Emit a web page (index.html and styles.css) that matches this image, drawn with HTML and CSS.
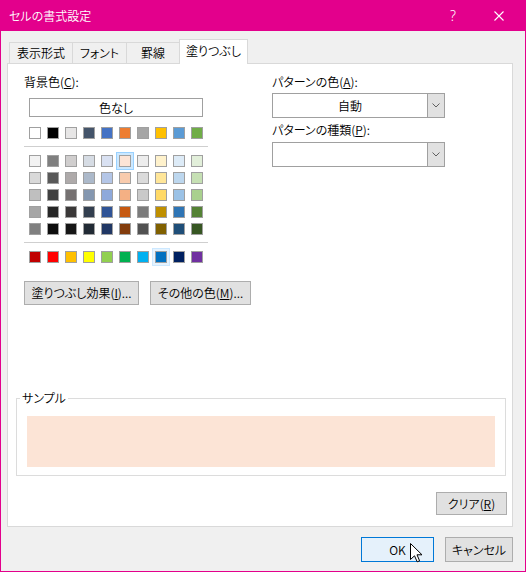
FILE: index.html
```html
<!DOCTYPE html>
<html lang="ja">
<head>
    <meta charset="UTF-8">
    <title>セルの書式設定</title>
    <link rel="stylesheet" href="styles.css">
</head>
<body>
    <div class="window">
        <div class="titlebar">
            <span class="title">セルの書式設定</span>
            <span class="caption-btn help">?</span>
            <span class="caption-btn close">
                <svg width="10" height="10" viewBox="0 0 10 10"><path d="M0.5 0.5 L9.5 9.5 M9.5 0.5 L0.5 9.5" stroke="#fff" stroke-width="1.1" fill="none"/></svg>
            </span>
        </div>

        <div class="tabs">
            <div class="tab tab-number">表示形式</div>
            <div class="tab tab-font">フォント</div>
            <div class="tab tab-border">罫線</div>
            <div class="tab tab-fill active">塗りつぶし</div>
        </div>

        <div class="panel">
            <div class="fill-top">
                <div class="bg-col">
                    <div class="field-label">背景色(<u>C</u>):</div>
                    <div class="none-btn">色なし</div>
                    <div class="swatches first" id="base-row"></div>
                    <div class="sep"></div>
                    <div class="theme" id="theme-grid"></div>
                    <div class="sep"></div>
                    <div class="swatches" id="std-row"></div>
                    <div class="btn-row">
                        <button class="btn effect-btn">塗りつぶし効果(<u>I</u>)...</button>
                        <button class="btn more-btn">その他の色(<u>M</u>)...</button>
                    </div>
                </div>
                <div class="pattern-col">
                    <div class="field-label">パターンの色(<u>A</u>):</div>
                    <div class="select">
                        <div class="select-value">自動</div>
                        <div class="select-arrow"><svg width="8" height="5" viewBox="0 0 8 5"><path d="M0.5 0.5 L4 4 L7.5 0.5" stroke="#606060" fill="none"/></svg></div>
                    </div>
                    <div class="field-label second">パターンの種類(<u>P</u>):</div>
                    <div class="select second">
                        <div class="select-value"></div>
                        <div class="select-arrow"><svg width="8" height="5" viewBox="0 0 8 5"><path d="M0.5 0.5 L4 4 L7.5 0.5" stroke="#606060" fill="none"/></svg></div>
                    </div>
                </div>
            </div>

            <div class="sample">
                <span class="sample-title">サンプル</span>
                <div class="sample-fill"></div>
            </div>

            <div class="panel-foot">
                <button class="btn clear-btn">クリア(<u>R</u>)</button>
            </div>
        </div>

        <div class="footer">
            <button class="btn ok-btn">OK</button>
            <button class="btn cancel-btn">キャンセル</button>
        </div>

        <svg class="cursor" width="13" height="20" viewBox="0 0 13 20">
            <path d="M0.5 0.5 L0.5 16.5 L4.5 12.8 L7.2 18.8 L9.6 17.8 L7 11.8 L12 11.8 Z" fill="#fff" stroke="#000" stroke-width="1"/>
        </svg>
    </div>

    <script>
        // Office テーマの色
        const base = ['#ffffff','#000000','#e7e6e6','#44546a','#4472c4','#ed7d31','#a5a5a5','#ffc000','#5b9bd5','#70ad47'];
        const theme = [
            ['#f2f2f2','#7f7f7f','#d0cece','#d6dce4','#d9e1f2','#fce4d6','#ededed','#fff2cc','#ddebf7','#e2efda'],
            ['#d9d9d9','#595959','#aeaaaa','#acb9ca','#b4c6e7','#f8cbad','#dbdbdb','#ffe699','#bdd7ee','#c6e0b4'],
            ['#bfbfbf','#404040','#757171','#8497b0','#8ea9db','#f4b084','#c9c9c9','#ffd966','#9bc2e6','#a9d08e'],
            ['#a6a6a6','#262626','#3a3838','#333f4f','#305496','#c65911','#7b7b7b','#bf8f00','#2f75b5','#548235'],
            ['#808080','#0d0d0d','#161616','#222b35','#203764','#833c0c','#525252','#806000','#1f4e78','#375623']
        ];
        const standard = ['#c00000','#ff0000','#ffc000','#ffff00','#92d050','#00b050','#00b0f0','#0070c0','#002060','#7030a0'];

        function fillRow(row, colors, extra) {
            colors.forEach((c, i) => {
                const sw = document.createElement('div');
                sw.className = 'swatch' + (extra && extra[i] ? ' ' + extra[i] : '');
                sw.style.backgroundColor = c;
                row.appendChild(sw);
            });
        }

        fillRow(document.getElementById('base-row'), base);

        const grid = document.getElementById('theme-grid');
        theme.forEach((colors, r) => {
            const row = document.createElement('div');
            row.className = 'swatches';
            fillRow(row, colors, r === 0 ? {5: 'selected'} : null);
            grid.appendChild(row);
        });

        fillRow(document.getElementById('std-row'), standard, {7: 'hot'});
    </script>
</body>
</html>
```

FILE: styles.css
```css
body {
    margin: 0;
    font-family: "Noto Sans CJK JP", "Noto Sans", sans-serif;
    font-size: 12px;
    font-weight: 350;
    font-feature-settings: "palt";
    color: #000;
}
.window {
    position: relative;
    width: 526px;
    height: 572px;
    box-sizing: border-box;
    border: 1px solid #e3008c;
    border-top: 0;
    background-color: #f0f0f0;
    overflow: hidden;
}
.titlebar {
    height: 31px;
    background-color: #e3008c;
    color: #fff;
    display: flex;
    align-items: center;
}
.title {
    flex: 1;
    padding-left: 8px;
    line-height: 16px;
}
.caption-btn {
    width: 46px;
    height: 31px;
    display: flex;
    align-items: center;
    justify-content: center;
}
.help {
    font-family: "Noto Sans", sans-serif;
    font-size: 14px;
}
.close {
    margin-right: 3px;
}

/* タブ */
.tabs {
    display: flex;
    align-items: flex-end;
    height: 25px;
    margin: 8px 0 -1px 8px;
}
.tab {
    height: 22px;
    box-sizing: border-box;
    border: 1px solid #d9d9d9;
    border-bottom: 0;
    margin-left: -1px;
    padding-bottom: 1px;
    display: flex;
    align-items: center;
    justify-content: center;
    line-height: 16px;
}
.tab:first-child {
    margin-left: 0;
}
.tab-number { width: 64px; }
.tab-font { width: 55px; }
.tab-border { width: 54px; }
.tab-fill { width: 69px; }
.tab.active {
    height: 25px;
    padding-bottom: 3px;
    background-color: #fff;
    position: relative;
    z-index: 1;
}

.panel {
    margin-left: 6px;
    width: 506px;
    height: 464px;
    box-sizing: border-box;
    border: 1px solid #d9d9d9;
    background-color: #fff;
    display: flex;
    flex-direction: column;
}
.fill-top {
    display: flex;
    padding: 10px 0 0 16px;
}
.bg-col {
    width: 248px;
}
.field-label {
    line-height: 16px;
}
.field-label.second {
    margin-top: 4px;
}
.none-btn {
    margin: 8px 0 0 5px;
    width: 174px;
    height: 19px;
    box-sizing: border-box;
    border: 1px solid #a0a0a0;
    text-align: center;
    line-height: 17px;
}

/* 色の見本 */
.swatches {
    display: flex;
    gap: 6px;
    padding-left: 5px;
}
.swatches.first {
    margin-top: 10px;
}
.theme {
    display: flex;
    flex-direction: column;
    gap: 5px;
}
.theme .swatches {
    padding-left: 0;
}
#theme-grid {
    padding-left: 5px;
}
.sep {
    width: 184px;
    height: 1px;
    background-color: #cfcfcf;
    margin: 7px 0 8px;
}
.swatch {
    width: 12px;
    height: 12px;
    box-sizing: border-box;
    border: 1px solid #a0a0a0;
}
.swatch.selected {
    box-shadow: 0 0 0 2px #cce8ff, 0 0 0 3px #99d1ff;
}
.swatch.hot {
    box-shadow: 0 0 0 2px #e5f3ff, 0 0 0 3px #cce8ff;
}

.btn-row {
    display: flex;
    gap: 11px;
    margin-top: 18px;
}
.btn {
    height: 24px;
    box-sizing: border-box;
    border: 1px solid #adadad;
    background-color: #e1e1e1;
    font: inherit;
    color: #000;
    padding: 0;
    line-height: 16px;
}
.effect-btn { width: 115px; }
.more-btn { width: 101px; }

/* パターン */
.select {
    margin-top: 3px;
    width: 173px;
    height: 25px;
    box-sizing: border-box;
    border: 1px solid #a0a0a0;
    display: flex;
}
.select.second {
    margin-top: 4px;
}
.select-value {
    flex: 1;
    text-align: center;
    line-height: 23px;
}
.select-arrow {
    width: 16px;
    background-color: #e1e1e1;
    border-left: 1px solid #a0a0a0;
    display: flex;
    align-items: center;
    justify-content: center;
}

/* サンプル */
.sample {
    position: relative;
    margin: 93px 6px 0 8px;
    border: 1px solid #dcdcdc;
    padding: 17px 10px 8px;
}
.sample-title {
    position: absolute;
    top: -9px;
    left: 3px;
    padding: 0 2px;
    background-color: #fff;
    line-height: 16px;
}
.sample-fill {
    height: 51px;
    background-color: #fce4d6;
}

.panel-foot {
    display: flex;
    justify-content: flex-end;
    margin-top: 16px;
    padding-right: 5px;
}
.clear-btn {
    width: 71px;
    height: 23px;
}

.footer {
    display: flex;
    justify-content: flex-end;
    gap: 11px;
    margin-top: 10px;
    padding-right: 12px;
}
.ok-btn {
    width: 73px;
    height: 25px;
    border-color: #0078d7;
    background-color: #e5f1fb;
}
.cancel-btn {
    width: 68px;
    height: 25px;
}
.cursor {
    position: absolute;
    left: 409px;
    top: 543px;
}
```
